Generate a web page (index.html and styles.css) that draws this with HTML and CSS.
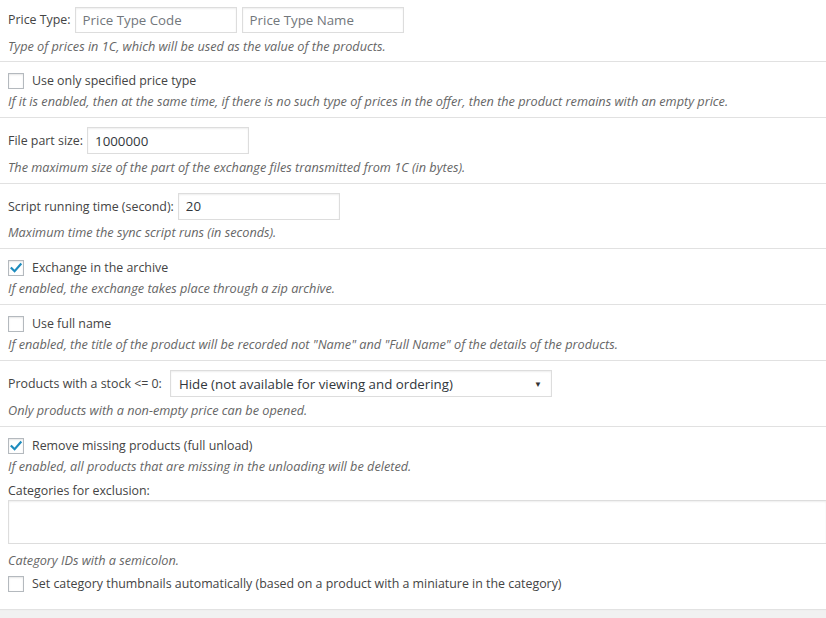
FILE: index.html
```html
<!DOCTYPE html>
<html>
<head>
<meta charset="utf-8">
<link rel="stylesheet" href="styles.css">
</head>
<body>
<div class="panel">
  <div class="row row-first">
    <div class="field">
      <span class="label">Price Type:</span>
      <input class="text w162" type="text" placeholder="Price Type Code">
      <input class="text w162" type="text" placeholder="Price Type Name">
    </div>
    <p class="desc">Type of prices in 1C, which will be used as the value of the products.</p>
  </div>
  <div class="row row-check">
    <label class="check"><span class="box"></span>Use only specified price type</label>
    <p class="desc">If it is enabled, then at the same time, if there is no such type of prices in the offer, then the product remains with an empty price.</p>
  </div>
  <div class="row">
    <div class="field">
      <span class="label">File part size:</span>
      <input class="text w162" type="text" value="1000000">
    </div>
    <p class="desc">The maximum size of the part of the exchange files transmitted from 1C (in bytes).</p>
  </div>
  <div class="row">
    <div class="field">
      <span class="label">Script running time (second):</span>
      <input class="text w162" type="text" value="20">
    </div>
    <p class="desc">Maximum time the sync script runs (in seconds).</p>
  </div>
  <div class="row row-check">
    <label class="check"><span class="box checked"><svg viewBox="0 0 16 16" width="16" height="16"><path d="M3.6 8.2 L6.6 11.2 L12.6 4.4" fill="none" stroke="#1e8cbe" stroke-width="2.2" stroke-linecap="square"/></svg></span>Exchange in the archive</label>
    <p class="desc">If enabled, the exchange takes place through a zip archive.</p>
  </div>
  <div class="row row-check">
    <label class="check"><span class="box"></span>Use full name</label>
    <p class="desc">If enabled, the title of the product will be recorded not "Name" and "Full Name" of the details of the products.</p>
  </div>
  <div class="row">
    <div class="field">
      <span class="label">Products with a stock &lt;= 0:</span>
      <div class="select">Hide (not available for viewing and ordering)<span class="arrow">&#9660;</span></div>
    </div>
    <p class="desc">Only products with a non-empty price can be opened.</p>
  </div>
  <div class="row row-check row-last">
    <label class="check"><span class="box checked"><svg viewBox="0 0 16 16" width="16" height="16"><path d="M3.6 8.2 L6.6 11.2 L12.6 4.4" fill="none" stroke="#1e8cbe" stroke-width="2.2" stroke-linecap="square"/></svg></span>Remove missing products (full unload)</label>
    <p class="desc">If enabled, all products that are missing in the unloading will be deleted.</p>
    <p class="plain">Categories for exclusion:</p>
    <div class="area"></div>
    <p class="desc desc-area">Category IDs with a semicolon.</p>
    <label class="check check-last"><span class="box"></span>Set category thumbnails automatically (based on a product with a miniature in the category)</label>
  </div>
</div>
<div class="footer"></div>
</body>
</html>
```
FILE: styles.css
```css
html, body {
  margin: 0;
  padding: 0;
  background: #f1f1f1;
}
body {
  width: 826px;
  height: 618px;
  overflow: hidden;
  font-family: "Open Sans", "Noto Sans", sans-serif;
  font-size: 12.4px;
  color: #444;
}
.panel {
  background: #fff;
  overflow: hidden;
  box-shadow: 0 1px 1px rgba(0,0,0,0.06);
}
.row {
  padding: 9px 8px 7px;
  border-bottom: 1px solid #e1e1e1;
}
.row > .desc {
  margin-top: 4.5px;
}
.row-first {
  padding-top: 6px;
  padding-bottom: 6.5px;
}
.row-first .text {
  height: 26px;
}
.row-check {
  padding-top: 9px;
}
.row-check > .desc {
  margin-top: 2px;
}
.row-last {
  border-bottom: none;
  padding-bottom: 15px;
}
.field {
  display: flex;
  align-items: center;
  height: 27px;
}
.label {
  margin-right: 4px;
  white-space: nowrap;
}
.text {
  box-sizing: border-box;
  height: 27px;
  margin: 0 5px 0 0;
  padding: 2px 7px;
  border: 1px solid #ddd;
  box-shadow: inset 0 1px 2px rgba(0,0,0,0.07);
  background: #fff;
  color: #32373c;
  font-family: "Open Sans", "Noto Sans", sans-serif;
  font-size: 13.3px;
  outline: none;
}
.text::placeholder {
  color: #72777c;
}
.w162 {
  width: 162px;
}
.desc {
  margin: 3px 0 0;
  line-height: 17px;
  font-style: italic;
  font-size: 12.7px;
  color: #666;
}
.check {
  display: flex;
  align-items: center;
  height: 20px;
  line-height: 20px;
}
.box {
  box-sizing: border-box;
  width: 16px;
  height: 16px;
  margin-right: 8px;
  border: 1px solid #b4b9be;
  background: #fff;
  box-shadow: inset 0 1px 2px rgba(0,0,0,0.1);
  display: flex;
  align-items: center;
  justify-content: center;
  flex: none;
}
.box svg {
  display: block;
  margin: -1px;
}
.select {
  box-sizing: border-box;
  width: 382px;
  height: 27px;
  margin-left: 4px;
  border: 1px solid #ddd;
  box-shadow: inset 0 1px 2px rgba(0,0,0,0.07);
  padding: 0 9px 0 8px;
  display: flex;
  align-items: center;
  justify-content: space-between;
  font-size: 13.3px;
  color: #32373c;
}
.arrow {
  font-size: 8px;
  color: #333;
}
.plain {
  margin: 7.5px 0 0;
  line-height: 18px;
}
.area {
  box-sizing: border-box;
  height: 44px;
  margin-right: -9px;
  border: 1px solid #ddd;
  box-shadow: inset 0 1px 2px rgba(0,0,0,0.07);
}
.row-last .desc-area {
  margin-top: 7.5px;
}
.check-last {
  margin-top: 5.5px;
}
.footer {
  height: 10px;
}
```
